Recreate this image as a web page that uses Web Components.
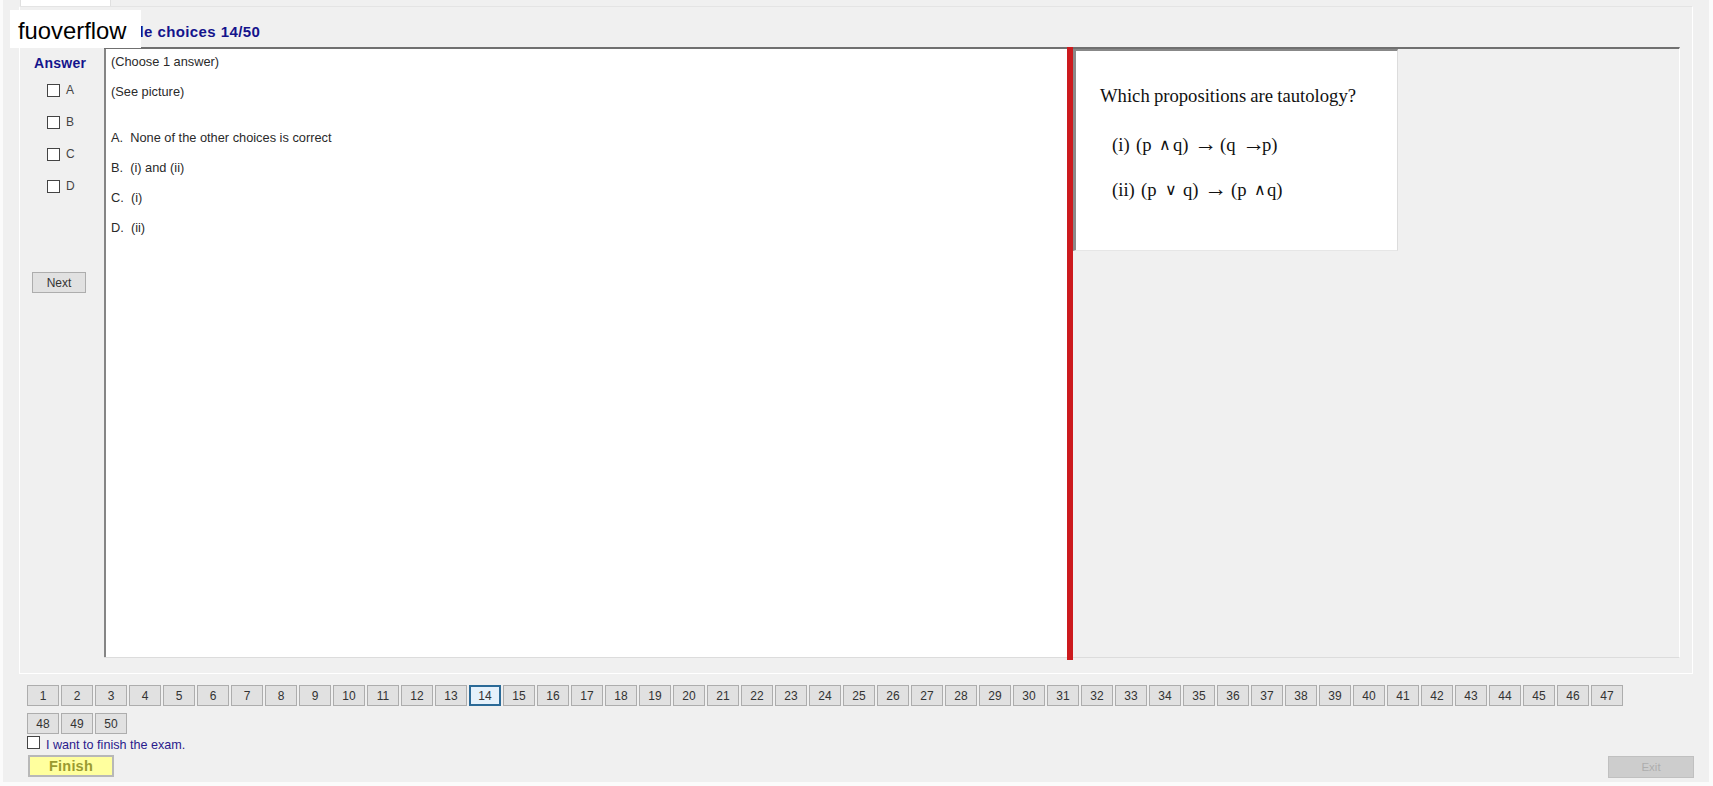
<!doctype html>
<html><head><meta charset="utf-8"><title>Exam</title>
<style>
html,body{margin:0;padding:0;height:100%;background:#fbfbfb;overflow:hidden}
body{font:12px "Liberation Sans",Arial,sans-serif}
</style></head><body>
<exam-app></exam-app>
<template id="t-btn"><style>
:host{display:inline-flex;align-items:center;justify-content:center;box-sizing:border-box;width:32px;height:21px;background:#e1e1e1;border:1px solid #adadad;font:12px "Liberation Sans",Arial,sans-serif;color:#333}
:host([current]){border:2px solid #2b6a97;background:#e5f1fb}
:host([wide]){width:54px}
</style><slot></slot></template>
<template id="t-check"><style>
:host{display:flex;align-items:center;gap:6px;height:13px;font:12px "Liberation Sans",Arial,sans-serif;color:#444}
i{display:block;box-sizing:border-box;width:13px;height:13px;background:#fff;border:1px solid #444}
span{position:relative;top:-1px}
</style><i></i><span><slot></slot></span></template>
<template id="t-question"><style>
:host{display:block;box-sizing:border-box;flex:none;width:963px;background:#fff;border-left:2px solid #858585;padding:5px 0 0 5px;font:12.8px "Liberation Sans",Arial,sans-serif;color:#2a2a2a;overflow:hidden}
</style><slot></slot></template>
<template id="t-picture"><style>
:host{display:block;box-sizing:border-box;width:325px;height:202px;background:#fff;border-top:2px solid #888;border-left:3px solid #8a8a8a;border-right:1px solid #dcdcdc;border-bottom:1px solid #e6e6e6;padding:34px 0 0 24px;font:18.67px "Liberation Serif","Times New Roman",serif;color:#111}
</style><slot></slot></template>
<template id="t-math"><style>
:host{display:flex;height:45px;padding-left:12px;line-height:22px;white-space:nowrap}
</style><slot></slot></template>
<template id="t-nav"><style>
:host{display:flex;flex-wrap:wrap;gap:7px 2px;width:1600px;padding:0}
</style><slot></slot></template>
<template id="t-app"><style>
:host{display:block;box-sizing:border-box;position:relative;width:1706px;height:782px;margin-left:3px;background:#f0f0f0;font:12px "Liberation Sans",Arial,sans-serif}
.tabs{height:6px;padding-left:17px}
.tab{width:91px;height:6px;background:#fff;border:1px solid #e0e0e0;border-width:0 1px;box-sizing:border-box}
.pane{box-sizing:border-box;margin-left:16px;width:1674px;height:668px;border:1px solid #fff;border-top-color:#e4e4e4;padding:0 12px 0 0;display:flex;flex-direction:column}
.title{height:40px;box-sizing:border-box;padding:16px 0 0 73px;font:bold 15px "Liberation Sans",Arial,sans-serif;color:#14148c;letter-spacing:.4px;line-height:18px;white-space:nowrap}
.main{display:flex;height:611px}
.side{width:84px;flex:none;display:flex;flex-direction:column}
.answer{height:31px;box-sizing:border-box;padding:8px 0 0 14px;font:bold 14px "Liberation Sans",Arial,sans-serif;letter-spacing:.3px;color:#14148c;line-height:17px}
.checks{display:flex;flex-direction:column;gap:19px;padding:6px 0 0 27px}
.next{margin:79px 0 0 12px}
.viewer{flex:1;display:flex;border-top:2px solid #707070;border-bottom:1px solid #dcdcdc;border-right:1px solid #fff;min-width:0}
.split{flex:none;width:6px;background:#cc1a1e;margin-top:-2px;margin-bottom:-3px}
.right{flex:1}
.which{height:49px;line-height:22px;word-spacing:-.5px;white-space:nowrap}
.q{margin:0;height:30px;line-height:15px;white-space:pre}
.q.big{height:46px}
b{display:inline-block;font-weight:400;flex:none}
.arrow{font-size:23px;line-height:20px;margin-left:-3px;margin-right:3px}
.op{font-family:"DejaVu Sans ExtraLight","DejaVu Sans",sans-serif;font-weight:200;font-size:16px}
.nav{padding:11px 0 0 24px}
.foot{display:flex;align-items:center;gap:6px;padding:2px 0 0 24px;height:13px;color:#2a1a8c;font-size:12.6px;line-height:13px}
.foot span{position:relative;top:3px}
.box{width:13px;height:13px;box-sizing:border-box;background:#fff;border:1px solid #444}
.finish{margin:6px 0 0 25px;box-sizing:border-box;width:86px;height:22px;background:#ffff9e;border:2px solid #b8b8b8;font:bold 14.5px "Liberation Sans",Arial,sans-serif;letter-spacing:.2px;color:#9a9a30;text-align:center;line-height:18px}
.exit{position:absolute;left:1605px;top:756px;box-sizing:border-box;width:86px;height:22px;background:#cdcdcd;border:1px solid #c0c0c0;color:#adadad;font-size:11.5px;text-align:center;line-height:20px}
.logo{position:absolute;left:7px;top:10px;width:131px;height:38px;background:#fff;color:#000;font:23.8px "Liberation Sans",Arial,sans-serif;line-height:42px;padding-left:8px;box-sizing:border-box;overflow:hidden}
</style>
<div class="tabs"><div class="tab"></div></div>
<div class="pane">
 <div class="title">Multiple choices 14/50</div>
 <div class="main">
  <div class="side">
   <div class="answer">Answer</div>
   <div class="checks"><exam-check>A</exam-check><exam-check>B</exam-check><exam-check>C</exam-check><exam-check>D</exam-check></div>
   <exam-btn class="next" wide>Next</exam-btn>
  </div>
  <div class="viewer">
   <exam-question>
    <p class="q">(Choose 1 answer)</p>
    <p class="q big">(See picture)</p>
    <p class="q">A.  None of the other choices is correct</p>
    <p class="q">B.  (i) and (ii)</p>
    <p class="q">C.  (i)</p>
    <p class="q">D.  (ii)</p>
   </exam-question>
   <div class="split"></div>
   <div class="right">
    <exam-picture>
     <div class="which">Which propositions are tautology?</div>
     <exam-math><b style="width:24px">(i)</b><b style="width:23.3px">(p</b><b class="op" style="width:13.7px">∧</b><b style="width:24px">q)</b><b class="arrow" style="width:23px">→</b><b style="width:25px">(q</b><b class="arrow" style="width:17px">→</b><b>p)</b></exam-math>
     <exam-math><b style="width:29px">(ii)</b><b style="width:24px">(p</b><b class="op" style="width:18px">∨</b><b style="width:24px">q)</b><b class="arrow" style="width:24px">→</b><b style="width:23px">(p</b><b class="op" style="width:13px">∧</b><b>q)</b></exam-math>
    </exam-picture>
   </div>
  </div>
 </div>
</div>
<div class="nav"><exam-nav id="nav"></exam-nav></div>
<div class="foot"><div class="box"></div><span>I want to finish the exam.</span></div>
<div class="finish">Finish</div>
<div class="exit">Exit</div>
<div class="logo">fuoverflow</div>
</template>
<script>
function mk(name,tid,after){customElements.define(name,class extends HTMLElement{constructor(){super();this.attachShadow({mode:'open'}).appendChild(document.getElementById(tid).content.cloneNode(true));if(after)after(this.shadowRoot)}})}
mk('exam-btn','t-btn');mk('exam-check','t-check');mk('exam-question','t-question');mk('exam-picture','t-picture');mk('exam-math','t-math');
mk('exam-nav','t-nav');
mk('exam-app','t-app',r=>{const n=r.getElementById('nav');for(let i=1;i<=50;i++){const b=document.createElement('exam-btn');b.textContent=i;if(i===14)b.setAttribute('current','');n.appendChild(b)}});
</script>
</body></html>
